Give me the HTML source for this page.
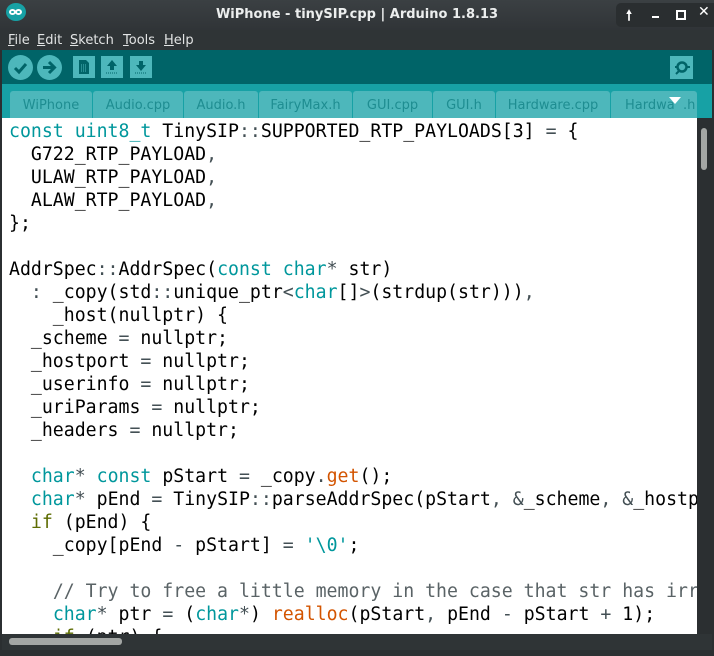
<!DOCTYPE html>
<html><head><meta charset="utf-8"><style>
*{margin:0;padding:0;box-sizing:border-box}
body{width:714px;height:656px;overflow:hidden;background:#2b2f31;position:relative;font-family:"DejaVu Sans","Liberation Sans",sans-serif}
.abs{position:absolute}
#title{left:0;top:0;width:714px;height:30px;background:linear-gradient(#3b4043,#303437);}
#title .t{left:0;width:714px;top:7px;text-align:center;color:#eceeee;font-weight:bold;font-size:13px}
#ctrl{left:616px;top:3px;width:98px;height:24px;background:#2a2e30;border-radius:5px 0 0 5px;color:#fff;font-size:14px;font-weight:bold}
#menu{left:0;top:30px;width:714px;height:20px;background:#2f3436;color:#e2e4e4;font-size:13px}
#menu span{position:absolute;top:3px}
#menu u{text-decoration:underline}
#tool{left:2px;top:50px;width:710px;height:34px;background:#006468}
.circ{position:absolute;top:5px;width:25px;height:25px;border-radius:50%;background:#4db7bb}
.sq{position:absolute;top:6px;width:22px;height:22px;background:#4db7bb}
#tabs{left:2px;top:84px;width:710px;height:34px;background:#17a1a5}
.tab{position:absolute;top:7px;height:27px;background:#4db7bb;border-radius:3px 3px 0 0;color:#1e8d91;font-size:13px;text-align:center;line-height:29px}
#ed{left:2px;top:118px;width:695px;height:516px;background:#fff;overflow:hidden}
pre{position:absolute;left:7px;top:2px;font-family:"DejaVu Sans Mono","Liberation Mono",monospace;font-size:18.2px;line-height:23px;color:#000;white-space:pre}
.k{color:#00979c}.o{color:#434f54}.f{color:#d35400}.i{color:#5e6d03}.c{color:#5a6366}
#vs{left:697px;top:118px;width:15px;height:516px;background:#2b2f31}
#hs{left:2px;top:634px;width:710px;height:16px;background:#2f3436}
</style></head><body>
<div id="title" class="abs">
 <div class="abs" style="left:6px;top:3px;width:20px;height:18px;border-radius:50%;background:#17a1a5"></div>
 <div class="abs" style="left:9px;top:9px;width:7px;height:6px;border:2px solid #fff;border-radius:50%"></div>
 <div class="abs" style="left:15px;top:9px;width:7px;height:6px;border:2px solid #fff;border-radius:50%"></div>
 <div class="abs t">WiPhone - tinySIP.cpp | Arduino 1.8.13</div>
</div>
<div id="ctrl" class="abs">
 <span class="abs" style="left:10px;top:2px">🠕</span>
 <span class="abs" style="left:36px;top:13px;width:7px;height:2px;background:#fff"></span>
 <span class="abs" style="left:60px;top:7px;width:10px;height:10px;border:2px solid #fff"></span>
 <span class="abs" style="left:82px;top:1px">✕</span>
</div>
<div id="menu" class="abs">
 <span style="left:8px"><u>F</u>ile</span><span style="left:37px"><u>E</u>dit</span><span style="left:70px"><u>S</u>ketch</span><span style="left:123px"><u>T</u>ools</span><span style="left:164px"><u>H</u>elp</span>
</div>
<div id="tool" class="abs">
 <div class="circ" style="left:6px"><svg width="25" height="25"><path d="M7 13l4 4 7-8" stroke="#006468" stroke-width="3" fill="none"/></svg></div>
 <div class="circ" style="left:35px"><svg width="25" height="25"><path d="M6 12.5h10M12 7l5.5 5.5L12 18" stroke="#006468" stroke-width="3" fill="none"/></svg></div>
 <div class="sq" style="left:71px"><svg width="22" height="22"><path d="M6 4h7l3 3v11H6z" fill="#006468"/><path d="M8 9h6M8 11h6M8 13h6M8 15h6" stroke="#4db7bb" stroke-width="1" stroke-dasharray="1 1"/></svg></div>
 <div class="sq" style="left:99px"><svg width="22" height="22"><path d="M11 4l5 6h-3v4h-4v-4H6z" fill="#006468"/><path d="M5 17h12" stroke="#006468" stroke-dasharray="1 1"/></svg></div>
 <div class="sq" style="left:128px"><svg width="22" height="22"><path d="M11 15l5-6h-3V5H9v4H6z" fill="#006468"/><path d="M5 17h12" stroke="#006468" stroke-dasharray="1 1"/></svg></div>
 <div class="sq" style="left:668px;width:23px;height:23px"><svg width="23" height="23"><circle cx="12" cy="11" r="4.5" stroke="#006468" stroke-width="2.5" fill="none"/><path d="M5 11h3M16 11h4M9 15l-3 3" stroke="#006468" stroke-width="2"/></svg></div>
</div>
<div id="tabs" class="abs">
 <div class="tab" style="left:8px;width:82px">WiPhone</div>
 <div class="tab" style="left:91px;width:90px">Audio.cpp</div>
 <div class="tab" style="left:182px;width:74px">Audio.h</div>
 <div class="tab" style="left:257px;width:93px">FairyMax.h</div>
 <div class="tab" style="left:351px;width:79px">GUI.cpp</div>
 <div class="tab" style="left:431px;width:62px">GUI.h</div>
 <div class="tab" style="left:494px;width:114px">Hardware.cpp</div>
 <div class="tab" style="left:609px;width:86px;text-align:left;padding-left:14px">Hardwa&nbsp;&nbsp;.h</div>
 <svg class="abs" style="left:667px;top:13px" width="12" height="8"><path d="M0 0h12L6 7z" fill="#fff"/></svg>
</div>
<div id="ed" class="abs"><pre><span class="k">const</span> <span class="k">uint8_t</span> TinySIP<span class="o">::</span>SUPPORTED_RTP_PAYLOADS[3] <span class="o">=</span> {
  G722_RTP_PAYLOAD<span class="o">,</span>
  ULAW_RTP_PAYLOAD<span class="o">,</span>
  ALAW_RTP_PAYLOAD<span class="o">,</span>
};

AddrSpec<span class="o">::</span>AddrSpec(<span class="k">const</span> <span class="k">char</span><span class="o">*</span> str)
  <span class="o">:</span> _copy(std<span class="o">::</span>unique_ptr<span class="o">&lt;</span><span class="k">char</span>[]<span class="o">&gt;</span>(strdup(str)))<span class="o">,</span>
    _host(nullptr) {
  _scheme <span class="o">=</span> nullptr;
  _hostport <span class="o">=</span> nullptr;
  _userinfo <span class="o">=</span> nullptr;
  _uriParams <span class="o">=</span> nullptr;
  _headers <span class="o">=</span> nullptr;

  <span class="k">char</span><span class="o">*</span> <span class="k">const</span> pStart <span class="o">=</span> _copy<span class="o">.</span><span class="f">get</span>();
  <span class="k">char</span><span class="o">*</span> pEnd <span class="o">=</span> TinySIP<span class="o">::</span>parseAddrSpec(pStart<span class="o">,</span> <span class="o">&amp;</span>_scheme<span class="o">,</span> <span class="o">&amp;</span>_hostport
  <span class="i">if</span> (pEnd) {
    _copy[pEnd <span class="o">-</span> pStart] <span class="o">=</span> <span class="k">'\0'</span>;

    <span class="c">// Try to free a little memory in the case that str has irr</span>
    <span class="k">char</span><span class="o">*</span> ptr <span class="o">=</span> (<span class="k">char</span><span class="o">*</span>) <span class="f">realloc</span>(pStart<span class="o">,</span> pEnd <span class="o">-</span> pStart <span class="o">+</span> 1);
    <span class="i">if</span> (ptr) {</pre></div>
<div id="vs" class="abs"><div class="abs" style="left:4px;top:10px;width:6px;height:42px;border-radius:3px;background:#a3a6a4"></div></div>
<div id="hs" class="abs"><div class="abs" style="left:7px;top:4px;width:113px;height:7px;border-radius:3px;background:#a3a6a4"></div></div>
</body></html>
